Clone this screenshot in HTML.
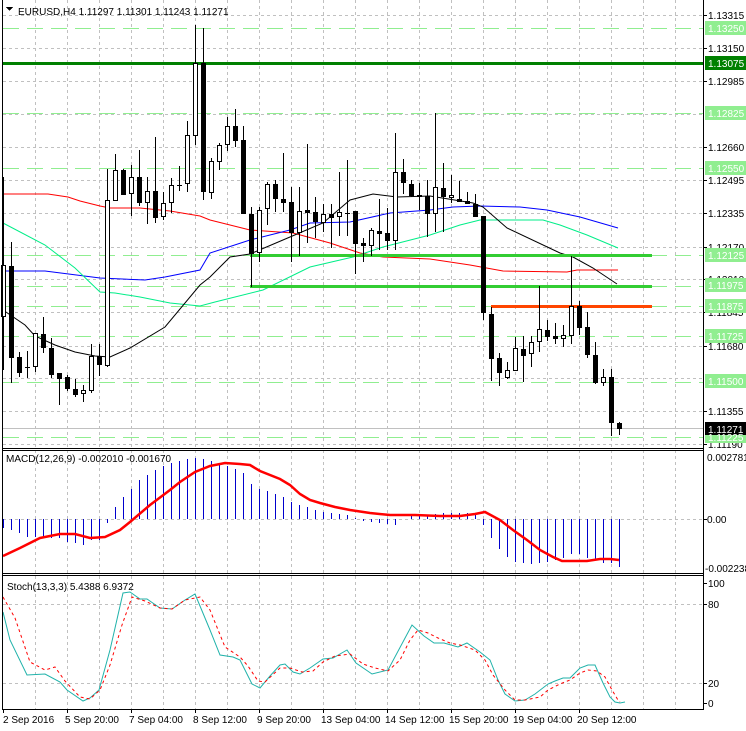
<!DOCTYPE html>
<html><head><meta charset="utf-8"><style>
html,body{margin:0;padding:0;background:#fff}
svg{display:block}
text{font-family:"Liberation Sans",sans-serif;font-size:10px}
</style></head><body>
<svg width="746" height="731" viewBox="0 0 746 731" xmlns="http://www.w3.org/2000/svg" shape-rendering="crispEdges">
<rect width="746" height="731" fill="#fff"/>
<!-- gray grid -->
<g stroke="#c0c0c0" stroke-width="1" stroke-dasharray="3,3">
<path d="M3 15.5H703M3 48.5H703M3 81.5H703M3 114.5H703M3 147.5H703M3 180.5H703M3 213.5H703M3 247.5H703M3 279.5H703M3 312.5H703M3 346.5H703M3 378.5H703M3 411.5H703M3 444.5H703M3 519.5H703M3 604.5H703M3 683.5H703"/>
<path d="M35.5 0V709M67.5 0V709M99.5 0V709M131.5 0V709M163.5 0V709M195.5 0V709M227.5 0V709M259.5 0V709M291.5 0V709M323.5 0V709M355.5 0V709M387.5 0V709M419.5 0V709M451.5 0V709M483.5 0V709M515.5 0V709M547.5 0V709M579.5 0V709M611.5 0V709M643.5 0V709M675.5 0V709"/>
</g>
<!-- light green dashed levels -->
<g stroke="#90ee90" stroke-width="1" stroke-dasharray="16,8">
<path d="M3 28.5H703M3 113.5H703M3 168.5H703M3 255.5H703M3 286.5H703M3 306.5H703M3 336.5H703M3 382.5H703M3 437.5H703"/>
</g>
<path d="M3 428.5H703" stroke="#c0c0c0"/>
<!-- MAs -->
<g fill="none" stroke-width="1" shape-rendering="auto">
<polyline stroke="#ff0000" points="3,194 48,194 68,197 80,201 100,206 110,208 140,208 170,211 200,216 210,220 250,230 293,233 330,243 360,253 383,257 430,259 470,265 503,271 567,272 577,270 618,270"/>
<polyline stroke="#0000ff" points="3,271 45,271 100,278 145,280 165,277 200,270 210,253 250,240 290,230 310,223 350,222 390,213 430,210 453,207 480,206 520,207 547,210 580,217 618,228"/>
<polyline stroke="#00ee88" points="3,223 45,245 75,268 100,292 115,293 140,297 170,303 200,306 215,302 263,290 310,267 353,257 383,247 430,235 460,225 480,220 543,220 560,225 587,235 618,248"/>
<polyline stroke="#000" points="3,310 25,325 35,336 55,345 75,352 95,356 110,357 130,348 165,327 200,285 210,277 230,257 250,254 290,237 323,223 350,200 373,194 397,197 430,196 473,203 483,207 507,228 560,253 573,257 593,268 617,284"/>
</g>
<!-- thick level lines -->
<path d="M3 63.5H703" stroke="#008000" stroke-width="3"/>
<path d="M250 255.5H652M250 286.5H652" stroke="#32cd32" stroke-width="3"/>
<path d="M491 306.5H652" stroke="#ff4500" stroke-width="3"/>
<!-- candles -->
<g id="c" stroke="#000" stroke-width="1">
<path d="M3.5 177V370M11.5 242V383M19.5 352V377M27.5 351V378M35.5 333V372M43.5 317V353M51.5 338V378M59.5 373V405M67.5 375V391M75.5 379V397M83.5 385V402M91.5 344V393M99.5 344V376M107.5 169V367M115.5 154V201M123.5 169V195M131.5 165V216M139.5 150V206M147.5 177V224M155.5 137V223M163.5 192V220M171.5 178V213M179.5 166V191M187.5 121V192M195.5 25V145M203.5 28V200M211.5 158V199M219.5 143V170M227.5 117V151M235.5 109V147M243.5 126V214M251.5 207V287M259.5 207V262M267.5 182V225M275.5 180V212M283.5 153V212M291.5 187V262M299.5 187V256M307.5 144V243M315.5 197V238M323.5 204V232M331.5 204V248M339.5 172V236M347.5 160V236M355.5 211V274M363.5 238V262M371.5 228V256M379.5 199V250M387.5 208V250M395.5 133V250M403.5 159V194M411.5 180V197M419.5 183V210M427.5 180V237M435.5 113V232M443.5 163V232M451.5 175V203M459.5 181V202M467.5 192V204M475.5 194V217M483.5 216V320M491.5 307V381M499.5 353V386M507.5 362V379M515.5 337V371M523.5 336V382M531.5 336V367M539.5 286V352M547.5 320V341M555.5 323V344M563.5 325V347M571.5 256V344M579.5 301V335M587.5 312V358M595.5 342V384M603.5 369V386M611.5 369V436M619.5 422V435"/>
<path d="M25 367.5H30M177 185.5H182M345 213.5H350"/>
<g fill="#fff">
<rect x="1.5" y="265.5" width="4" height="51"/>
<rect x="33.5" y="333.5" width="4" height="33"/>
<rect x="81.5" y="390.5" width="4" height="3"/>
<rect x="89.5" y="356.5" width="4" height="34"/>
<rect x="105.5" y="200.5" width="4" height="165"/>
<rect x="113.5" y="170.5" width="4" height="30"/>
<rect x="129.5" y="177.5" width="4" height="16"/>
<rect x="145.5" y="191.5" width="4" height="11"/>
<rect x="161.5" y="203.5" width="4" height="13"/>
<rect x="169.5" y="185.5" width="4" height="17"/>
<rect x="185.5" y="135.5" width="4" height="48"/>
<rect x="193.5" y="63.5" width="4" height="72"/>
<rect x="209.5" y="161.5" width="4" height="31"/>
<rect x="217.5" y="145.5" width="4" height="16"/>
<rect x="225.5" y="126.5" width="4" height="18"/>
<rect x="257.5" y="210.5" width="4" height="42"/>
<rect x="265.5" y="184.5" width="4" height="24"/>
<rect x="297.5" y="211.5" width="4" height="21"/>
<rect x="321.5" y="214.5" width="4" height="8"/>
<rect x="337.5" y="212.5" width="4" height="4"/>
<rect x="369.5" y="230.5" width="4" height="15"/>
<rect x="393.5" y="172.5" width="4" height="68"/>
<rect x="433.5" y="187.5" width="4" height="26"/>
<rect x="449.5" y="195.5" width="4" height="2"/>
<rect x="505.5" y="370.5" width="4" height="7"/>
<rect x="513.5" y="348.5" width="4" height="22"/>
<rect x="529.5" y="342.5" width="4" height="11"/>
<rect x="537.5" y="329.5" width="4" height="12"/>
<rect x="561.5" y="335.5" width="4" height="3"/>
<rect x="569.5" y="306.5" width="4" height="29"/>
<rect x="601.5" y="377.5" width="4" height="5"/>
</g>
<g fill="#000" stroke="none">
<rect x="9" y="266" width="5" height="92"/>
<rect x="17" y="357" width="5" height="16"/>
<rect x="41" y="334" width="5" height="14"/>
<rect x="49" y="348" width="5" height="27"/>
<rect x="57" y="373" width="5" height="6"/>
<rect x="65" y="377" width="5" height="12"/>
<rect x="73" y="389" width="5" height="6"/>
<rect x="97" y="356" width="5" height="9"/>
<rect x="121" y="170" width="5" height="25"/>
<rect x="137" y="177" width="5" height="26"/>
<rect x="153" y="191" width="5" height="27"/>
<rect x="201" y="63" width="5" height="129"/>
<rect x="233" y="126" width="5" height="15"/>
<rect x="241" y="140" width="5" height="74"/>
<rect x="249" y="214" width="5" height="40"/>
<rect x="273" y="184" width="5" height="15"/>
<rect x="281" y="199" width="5" height="4"/>
<rect x="289" y="202" width="5" height="31"/>
<rect x="305" y="210" width="5" height="3"/>
<rect x="313" y="212" width="5" height="10"/>
<rect x="329" y="214" width="5" height="4"/>
<rect x="353" y="211" width="5" height="33"/>
<rect x="361" y="243" width="5" height="3"/>
<rect x="377" y="231" width="5" height="3"/>
<rect x="385" y="233" width="5" height="8"/>
<rect x="401" y="172" width="5" height="11"/>
<rect x="409" y="184" width="5" height="12"/>
<rect x="417" y="195" width="5" height="2"/>
<rect x="425" y="196" width="5" height="18"/>
<rect x="441" y="188" width="5" height="9"/>
<rect x="457" y="199" width="5" height="3"/>
<rect x="465" y="201" width="5" height="3"/>
<rect x="473" y="204" width="5" height="13"/>
<rect x="481" y="216" width="5" height="97"/>
<rect x="489" y="314" width="5" height="45"/>
<rect x="497" y="358" width="5" height="15"/>
<rect x="521" y="349" width="5" height="7"/>
<rect x="545" y="330" width="5" height="7"/>
<rect x="553" y="336" width="5" height="3"/>
<rect x="577" y="306" width="5" height="22"/>
<rect x="585" y="327" width="5" height="28"/>
<rect x="593" y="355" width="5" height="28"/>
<rect x="609" y="377" width="5" height="46"/>
<rect x="617" y="423" width="5" height="6"/>
</g>
</g>
<!-- MACD histogram -->
<path stroke="#0000cd" stroke-width="1" d="M3.5 519V528M11.5 519V530M19.5 519V533M27.5 519V537M35.5 519V537M43.5 519V538M51.5 519V538M59.5 519V538M67.5 519V542M75.5 519V543M83.5 519V545M91.5 519V540M99.5 519V540M107.5 519V523M115.5 519V507M123.5 519V497M131.5 519V489M139.5 519V480M147.5 519V475M155.5 519V470M163.5 519V466M171.5 519V463M179.5 519V461M187.5 519V459M195.5 519V458M203.5 519V459M211.5 519V461M219.5 519V463M227.5 519V466M235.5 519V469M243.5 519V473M251.5 519V484M259.5 519V489M267.5 519V491M275.5 519V494M283.5 519V497M291.5 519V502M299.5 519V505M307.5 519V507M315.5 519V510M323.5 519V512M331.5 519V513M339.5 519V514M347.5 519V515M355.5 519V518M363.5 519V521M371.5 519V522M379.5 519V523M387.5 519V524M395.5 519V525M411.5 519V516M419.5 519V516M427.5 519V515M435.5 519V514M443.5 519V513M451.5 519V513M459.5 519V513M467.5 519V513M475.5 519V514M483.5 519V525M491.5 519V538M499.5 519V549M507.5 519V557M515.5 519V562M523.5 519V563M531.5 519V564M539.5 519V563M547.5 519V562M555.5 519V560M563.5 519V558M571.5 519V554M579.5 519V554M587.5 519V558M595.5 519V560M603.5 519V563M611.5 519V563M619.5 519V567"/>
<polyline fill="none" stroke="#ff0000" stroke-width="2.5" shape-rendering="auto" points="3,556 20,548 40,538 60,534 75,534 90,538 105,537 120,530 130,522 150,505 170,490 180,482 195,472 210,466 225,463 240,464 250,465 260,471 280,479 290,485 300,494 310,500 320,503 335,507 350,510 370,513 390,515 415,515 440,516 460,516 475,514 485,512 500,520 513,530 527,540 540,550 553,557 562,561 587,561 600,559 610,559 619,560"/>
<!-- Stoch -->
<polyline fill="none" stroke="#20b2aa" stroke-width="1" shape-rendering="auto" points="3,612 10,640 27,675 45,674 60,682 67,690 83,701 90,698 99,690 110,650 123,593 130,592 140,599 147,599 160,608 172,609 185,600 195,594 210,630 220,655 233,657 240,660 252,684 260,688 270,676 280,665 285,664 293,672 300,674 310,668 323,659 333,658 347,650 356,663 372,674 388,670 412,625 424,636 434,643 444,643 458,647 467,643 480,652 490,660 498,680 505,694 515,701 525,700 535,694 548,684 555,681 563,678 570,678 575,673 580,668 588,665 595,665 603,683 610,697 615,702 620,703 625,702"/>
<polyline fill="none" stroke="#ff0000" stroke-width="1" stroke-dasharray="3,3" shape-rendering="auto" points="3,597 15,618 30,662 45,670 55,667 65,681 80,697 90,699 100,690 110,665 122,625 132,597 145,601 160,608 172,609 185,600 200,597 210,610 225,647 240,657 248,666 258,681 265,682 280,668 290,668 302,672 313,671 323,662 335,656 350,654 363,664 375,668 388,671 400,660 410,640 418,630 428,633 438,638 450,643 460,645 475,650 485,660 493,675 505,690 515,700 525,700 540,697 548,690 560,684 570,680 580,673 588,670 597,671 605,677 612,690 618,700 620,702"/>
<!-- borders -->
<g stroke="#000" stroke-width="1" fill="none">
<path d="M2.5 0V710M703.5 0V710M2 448.5H704M2 450.5H704M2 573.5H704M2 575.5H704M2 709.5H704"/>
<path d="M704 15.5h3M704 48.5h3M704 81.5h3M704 147.5h3M704 180.5h3M704 213.5h3M704 247.5h3M704 279.5h3M704 312.5h3M704 346.5h3M704 411.5h3M704 444.5h3M704 519.5h3M704 583.5h3M704 604.5h3M704 683.5h3M704 703.5h3"/>
<path d="M3.5 710v3M67.5 710v3M131.5 710v3M195.5 710v3M259.5 710v3M323.5 710v3M387.5 710v3M451.5 710v3M515.5 710v3M579.5 710v3"/>
</g>
<!-- header -->
<path d="M6 7h7l-3.5 4z" fill="#000"/>
<text x="18" y="15" font-size="11">EURUSD,H4  1.11297 1.11301 1.11243 1.11271</text>
<text x="6" y="462" font-size="10">MACD(12,26,9) -0.002010 -0.001670</text>
<text x="7" y="590" font-size="10">Stoch(13,3,3) 5.4388 6.9372</text>
<!-- right axis labels -->
<g font-size="10" fill="#000">
<text x="708" y="19">1.13315</text>
<text x="708" y="52">1.13150</text>
<text x="708" y="85">1.12985</text>
<text x="708" y="151">1.12660</text>
<text x="708" y="184">1.12495</text>
<text x="708" y="217">1.12335</text>
<text x="708" y="251">1.12170</text>
<text x="708" y="283">1.12010</text>
<text x="708" y="316">1.11845</text>
<text x="708" y="350">1.11680</text>
<text x="708" y="415">1.11355</text>
<text x="708" y="448">1.11190</text>
<text x="707" y="461">0.002781</text>
<text x="707" y="523">0.00</text>
<text x="705" y="572">-0.002238</text>
<text x="708" y="587">100</text>
<text x="708" y="608">80</text>
<text x="708" y="687">20</text>
<text x="708" y="707">0</text>
</g>
<g fill="#90ee90">
<rect x="705" y="21" width="41" height="14"/>
<rect x="705" y="106" width="41" height="14"/>
<rect x="705" y="161" width="41" height="14"/>
<rect x="705" y="248" width="41" height="14"/>
<rect x="705" y="278" width="41" height="14"/>
<rect x="705" y="299" width="41" height="14"/>
<rect x="705" y="329" width="41" height="14"/>
<rect x="705" y="374" width="41" height="14"/>
<rect x="705" y="430" width="41" height="13"/>
</g>
<rect x="705" y="56" width="41" height="14" fill="#008000"/>
<rect x="705" y="422" width="41" height="13" fill="#000"/>
<g font-size="10" fill="#fff">
<text x="708" y="32">1.13250</text>
<text x="708" y="67">1.13075</text>
<text x="708" y="117">1.12825</text>
<text x="708" y="172">1.12550</text>
<text x="708" y="259">1.12125</text>
<text x="708" y="289">1.11975</text>
<text x="708" y="310">1.11875</text>
<text x="708" y="340">1.11725</text>
<text x="708" y="385">1.11500</text>
<text x="708" y="433">1.11271</text>
<text x="708" y="441">1.11225</text>
</g>
<!-- time axis -->
<g font-size="10" fill="#000">
<text x="3" y="723">2 Sep 2016</text>
<text x="65" y="723">5 Sep 20:00</text>
<text x="129" y="723">7 Sep 04:00</text>
<text x="193" y="723">8 Sep 12:00</text>
<text x="257" y="723">9 Sep 20:00</text>
<text x="321" y="723">13 Sep 04:00</text>
<text x="385" y="723">14 Sep 12:00</text>
<text x="449" y="723">15 Sep 20:00</text>
<text x="513" y="723">19 Sep 04:00</text>
<text x="577" y="723">20 Sep 12:00</text>
</g>
</svg>
</body></html>
